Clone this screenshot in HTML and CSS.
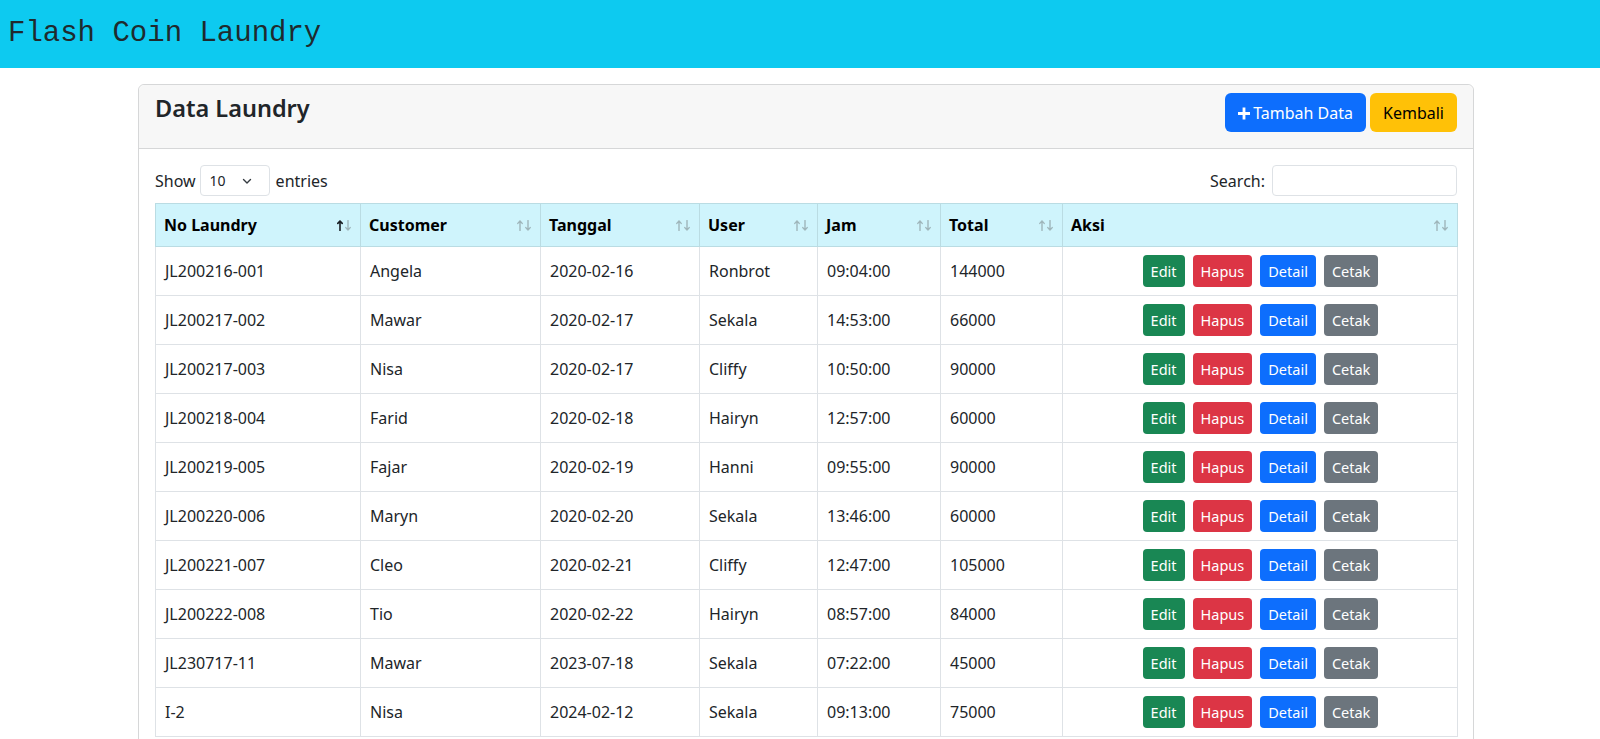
FILE: index.html
```html
<!DOCTYPE html>
<html lang="id">
<head>
<meta charset="utf-8">
<title>Flash Coin Laundry</title>
<link rel="stylesheet" href="styles.css">
</head>
<body>
<header class="topbar">
  <span class="brand">Flash Coin Laundry</span>
</header>
<main class="main">
  <section class="card">
    <div class="card-header">
      <h3 class="card-title">Data Laundry</h3>
      <div class="header-actions">
        <button class="btn btn-primary"><svg class="plus" width="14" height="16" viewBox="0 0 14 16"><path d="M5.6 2.5h2.8v4.6H13v2.8H8.4v4.6H5.6V9.9H1V7.1h4.6z" fill="#fff"/></svg>Tambah Data</button>
        <button class="btn btn-warning">Kembali</button>
      </div>
    </div>
    <div class="card-body">
      <div class="dt-controls">
        <label class="dt-length">Show
          <span class="select">10<svg width="10" height="8" viewBox="0 0 10 8"><path d="M1.5 2.5 5 6l3.5-3.5" fill="none" stroke="#343a40" stroke-width="1.4" stroke-linecap="round" stroke-linejoin="round"/></svg></span>
          entries</label>
        <label class="dt-search">Search: <span class="search-input"></span></label>
      </div>
      <table class="table">
        <colgroup>
          <col style="width:205px"><col style="width:180px"><col style="width:159px"><col style="width:118px"><col style="width:123px"><col style="width:122px"><col style="width:395px">
        </colgroup>
        <thead>
          <tr>
            <th><div class="th-inner"><span>No Laundry</span><span class="sort active"><svg width="16" height="11" viewBox="0 0 16 11"><path class="up" d="M3 10.5V1M0.8 3.4 3 1l2.2 2.4"/><path class="down" d="M11 0.5V10M8.8 7.6 11 10l2.2-2.4"/></svg></span></div></th>
            <th><div class="th-inner"><span>Customer</span><span class="sort"><svg width="16" height="11" viewBox="0 0 16 11"><path class="up" d="M3 10.5V1M0.8 3.4 3 1l2.2 2.4"/><path class="down" d="M11 0.5V10M8.8 7.6 11 10l2.2-2.4"/></svg></span></div></th>
            <th><div class="th-inner"><span>Tanggal</span><span class="sort"><svg width="16" height="11" viewBox="0 0 16 11"><path class="up" d="M3 10.5V1M0.8 3.4 3 1l2.2 2.4"/><path class="down" d="M11 0.5V10M8.8 7.6 11 10l2.2-2.4"/></svg></span></div></th>
            <th><div class="th-inner"><span>User</span><span class="sort"><svg width="16" height="11" viewBox="0 0 16 11"><path class="up" d="M3 10.5V1M0.8 3.4 3 1l2.2 2.4"/><path class="down" d="M11 0.5V10M8.8 7.6 11 10l2.2-2.4"/></svg></span></div></th>
            <th><div class="th-inner"><span>Jam</span><span class="sort"><svg width="16" height="11" viewBox="0 0 16 11"><path class="up" d="M3 10.5V1M0.8 3.4 3 1l2.2 2.4"/><path class="down" d="M11 0.5V10M8.8 7.6 11 10l2.2-2.4"/></svg></span></div></th>
            <th><div class="th-inner"><span>Total</span><span class="sort"><svg width="16" height="11" viewBox="0 0 16 11"><path class="up" d="M3 10.5V1M0.8 3.4 3 1l2.2 2.4"/><path class="down" d="M11 0.5V10M8.8 7.6 11 10l2.2-2.4"/></svg></span></div></th>
            <th><div class="th-inner"><span>Aksi</span><span class="sort"><svg width="16" height="11" viewBox="0 0 16 11"><path class="up" d="M3 10.5V1M0.8 3.4 3 1l2.2 2.4"/><path class="down" d="M11 0.5V10M8.8 7.6 11 10l2.2-2.4"/></svg></span></div></th>
          </tr>
        </thead>
        <tbody>
          <tr><td>JL200216-001</td><td>Angela</td><td>2020-02-16</td><td>Ronbrot</td><td>09:04:00</td><td>144000</td><td><div class="actions"><a class="btn-sm btn-success">Edit</a><a class="btn-sm btn-danger">Hapus</a><a class="btn-sm btn-primary">Detail</a><a class="btn-sm btn-secondary">Cetak</a></div></td></tr>
          <tr><td>JL200217-002</td><td>Mawar</td><td>2020-02-17</td><td>Sekala</td><td>14:53:00</td><td>66000</td><td><div class="actions"><a class="btn-sm btn-success">Edit</a><a class="btn-sm btn-danger">Hapus</a><a class="btn-sm btn-primary">Detail</a><a class="btn-sm btn-secondary">Cetak</a></div></td></tr>
          <tr><td>JL200217-003</td><td>Nisa</td><td>2020-02-17</td><td>Cliffy</td><td>10:50:00</td><td>90000</td><td><div class="actions"><a class="btn-sm btn-success">Edit</a><a class="btn-sm btn-danger">Hapus</a><a class="btn-sm btn-primary">Detail</a><a class="btn-sm btn-secondary">Cetak</a></div></td></tr>
          <tr><td>JL200218-004</td><td>Farid</td><td>2020-02-18</td><td>Hairyn</td><td>12:57:00</td><td>60000</td><td><div class="actions"><a class="btn-sm btn-success">Edit</a><a class="btn-sm btn-danger">Hapus</a><a class="btn-sm btn-primary">Detail</a><a class="btn-sm btn-secondary">Cetak</a></div></td></tr>
          <tr><td>JL200219-005</td><td>Fajar</td><td>2020-02-19</td><td>Hanni</td><td>09:55:00</td><td>90000</td><td><div class="actions"><a class="btn-sm btn-success">Edit</a><a class="btn-sm btn-danger">Hapus</a><a class="btn-sm btn-primary">Detail</a><a class="btn-sm btn-secondary">Cetak</a></div></td></tr>
          <tr><td>JL200220-006</td><td>Maryn</td><td>2020-02-20</td><td>Sekala</td><td>13:46:00</td><td>60000</td><td><div class="actions"><a class="btn-sm btn-success">Edit</a><a class="btn-sm btn-danger">Hapus</a><a class="btn-sm btn-primary">Detail</a><a class="btn-sm btn-secondary">Cetak</a></div></td></tr>
          <tr><td>JL200221-007</td><td>Cleo</td><td>2020-02-21</td><td>Cliffy</td><td>12:47:00</td><td>105000</td><td><div class="actions"><a class="btn-sm btn-success">Edit</a><a class="btn-sm btn-danger">Hapus</a><a class="btn-sm btn-primary">Detail</a><a class="btn-sm btn-secondary">Cetak</a></div></td></tr>
          <tr><td>JL200222-008</td><td>Tio</td><td>2020-02-22</td><td>Hairyn</td><td>08:57:00</td><td>84000</td><td><div class="actions"><a class="btn-sm btn-success">Edit</a><a class="btn-sm btn-danger">Hapus</a><a class="btn-sm btn-primary">Detail</a><a class="btn-sm btn-secondary">Cetak</a></div></td></tr>
          <tr><td>JL230717-11</td><td>Mawar</td><td>2023-07-18</td><td>Sekala</td><td>07:22:00</td><td>45000</td><td><div class="actions"><a class="btn-sm btn-success">Edit</a><a class="btn-sm btn-danger">Hapus</a><a class="btn-sm btn-primary">Detail</a><a class="btn-sm btn-secondary">Cetak</a></div></td></tr>
          <tr><td>I-2</td><td>Nisa</td><td>2024-02-12</td><td>Sekala</td><td>09:13:00</td><td>75000</td><td><div class="actions"><a class="btn-sm btn-success">Edit</a><a class="btn-sm btn-danger">Hapus</a><a class="btn-sm btn-primary">Detail</a><a class="btn-sm btn-secondary">Cetak</a></div></td></tr>
        </tbody>
      </table>
    </div>
  </section>
</main>
</body>
</html>
```

FILE: styles.css
```css
* { box-sizing: border-box; }

html, body {
  margin: 0;
  padding: 0;
  background: #fff;
}

body {
  font-family: "Noto Sans", "Open Sans", "Liberation Sans", sans-serif;
  font-size: 16px;
  line-height: 1.5;
  color: #212529;
  overflow: hidden;
}

.topbar {
  height: 68px;
  background: #0dcaf0;
  display: flex;
  align-items: center;
  padding: 0 0 0 8px;
}

.brand {
  font-family: "Liberation Mono", "Courier New", monospace;
  font-size: 29px;
  line-height: 1;
  color: #1f2a2e;
  margin-top: -1px;
}

.main {
  padding: 16px 126px 0 138px;
}

.card {
  border: 1px solid #d6d7d8;
  border-radius: 6px;
  background: #fff;
}

.card-header {
  display: flex;
  justify-content: space-between;
  align-items: flex-start;
  padding: 8px 16px 16px;
  background: #f7f7f7;
  border-bottom: 1px solid #d6d7d8;
  border-radius: 6px 6px 0 0;
}

.card-title {
  margin: 1px 0 0 0;
  font-size: 23.5px;
  font-weight: 600;
  line-height: 1.2;
  color: #212529;
}

.header-actions {
  display: flex;
  gap: 4px;
}

.btn {
  font-family: inherit;
  font-size: 16px;
  line-height: 24px;
  padding: 6px 12px 6px 11px;
  border: 1px solid transparent;
  border-radius: 6px;
  display: inline-flex;
  align-items: center;
  height: 39px;
}

.btn-warning {
  padding: 6px 12px;
}

.btn .plus {
  margin-right: 2px;
}

.btn-primary { background: #0d6efd; color: #fff; }
.btn-warning { background: #ffc107; color: #000; }

.card-body {
  padding: 16px;
}

.dt-controls {
  display: flex;
  justify-content: space-between;
  align-items: center;
  margin-bottom: 7px;
}

.dt-length, .dt-search {
  display: flex;
  align-items: center;
  font-size: 16px;
  color: #212529;
}

.select {
  display: inline-flex;
  align-items: center;
  justify-content: space-between;
  width: 70px;
  height: 31px;
  margin: 0 6px 0 4px;
  padding: 0 17px 0 9px;
  border: 1px solid #dee2e6;
  border-radius: 4px;
  font-size: 14px;
}

.search-input {
  display: inline-block;
  width: 185px;
  height: 31px;
  margin-left: 7px;
  border: 1px solid #dee2e6;
  border-radius: 4px;
  background: #fff;
}

.table {
  width: 1302px;
  table-layout: fixed;
  border-collapse: collapse;
}

.table th {
  background: #cff4fc;
  border: 1px solid #badce3;
  padding: 9px 7px 9px 8px;
  text-align: left;
  font-weight: 700;
  font-size: 16px;
  line-height: 24px;
  color: #000;
}

.th-inner {
  display: flex;
  justify-content: space-between;
  align-items: center;
}

.sort {
  display: flex;
  align-items: center;
}

.sort svg path {
  fill: none;
  stroke-width: 1.4;
  stroke-linecap: round;
  stroke-linejoin: round;
  stroke: #9fb6bb;
}

.sort.active svg path.up {
  stroke: #1a1f24;
  stroke-width: 1.6;
}

.table td {
  border: 1px solid #dee2e6;
  padding: 8px 8px 8px 9px;
  height: 49px;
  vertical-align: middle;
  font-size: 16px;
  line-height: 24px;
  color: #212529;
}

.actions {
  display: flex;
  justify-content: center;
  gap: 8px;
}

.btn-sm {
  display: inline-block;
  height: 32px;
  padding: 4px 8px;
  border-radius: 4px;
  font-size: 14.5px;
  line-height: 24px;
  color: #fff;
  text-decoration: none;
}

.btn-success { background: #198754; }
.btn-danger { background: #dc3545; }
.btn-sm.btn-primary { background: #0d6efd; }
.btn-secondary { background: #6c757d; }
```
